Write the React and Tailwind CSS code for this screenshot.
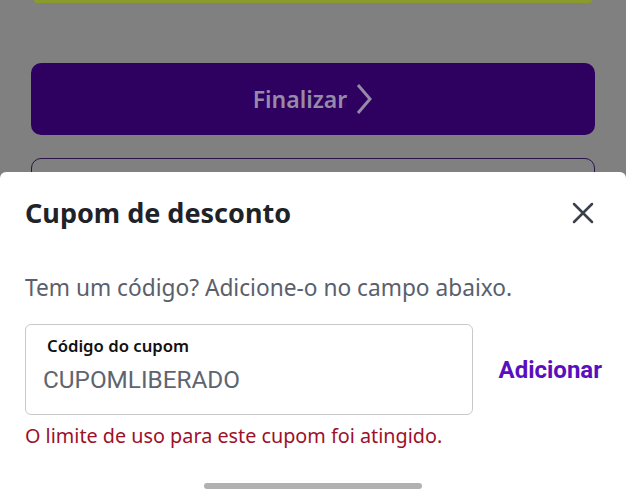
import React from 'react';

const CouponSheet = () => {
  return (
    <div className="flex flex-1 flex-col bg-white rounded-t-[6px] px-[25px]">
      {/* Header */}
      <div className="flex items-center justify-between pt-[24px]">
        <h2 className="text-[27px] leading-[34px] font-bold text-[#1f2328] font-['Noto_Sans',sans-serif]">
          Cupom de desconto
        </h2>
        <button className="mr-[7px] text-[#3a404c]" aria-label="Fechar">
          <svg width="22" height="22" viewBox="0 0 22 22" fill="none" stroke="currentColor" strokeWidth="2.5" strokeLinecap="round">
            <path d="M2 2l18 18M20 2L2 20" />
          </svg>
        </button>
      </div>

      <p className="mt-[44px] text-[22.7px] leading-[28px] text-[#59606c] font-['Noto_Sans',sans-serif]">
        Tem um código? Adicione-o no campo abaixo.
      </p>

      {/* Coupon input */}
      <div className="mt-[22px] flex items-center">
        <div className="w-[448px] h-[91px] rounded-[6px] border border-[#c9c9c9] pl-[17px] pt-[10px]">
          <div className="pl-[4px] text-[16.7px] leading-[21px] font-semibold text-[#111] font-['Noto_Sans',sans-serif]">
            Código do cupom
          </div>
          <div className="mt-[9px] text-[24.3px] leading-[30px] text-[#5e6570] font-['Roboto',sans-serif]">
            CUPOMLIBERADO
          </div>
        </div>
        <button className="ml-auto mr-[-1px] text-[24px] font-bold text-[#5a0fbe] font-['Roboto',sans-serif]">
          Adicionar
        </button>
      </div>

      <p className="mt-[8px] text-[19.8px] leading-[26px] text-[#9e0f2a] font-['Noto_Sans',sans-serif]">
        O limite de uso para este cupom foi atingido.
      </p>

      <div className="mt-[34px] mx-auto h-[6px] w-[218px] rounded-full bg-[#b1b1b1]" />
    </div>
  );
};

const App = () => {
  return (
    <div className="w-[626px] h-[500px] flex flex-col overflow-hidden bg-[#808080]">
      {/* Dimmed page behind the sheet */}
      <div className="h-[172px] shrink-0 overflow-hidden px-[31px]">
        <div className="mx-[3px] h-[3px] rounded-b-[3px] bg-[#8b9b2b]" />
        <button className="mt-[60px] flex h-[72px] w-full items-center justify-center gap-[8px] rounded-[10px] bg-[#2e0060]">
          <span className="text-[23px] font-semibold text-[#968aa6] font-['Noto_Sans',sans-serif]">Finalizar</span>
          <svg width="18" height="32" viewBox="0 0 18 32" fill="none" stroke="#968aa6" strokeWidth="3">
            <path d="M3 2l12 14L3 30" />
          </svg>
        </button>
        <div className="mt-[23px] h-[60px] rounded-[10px] border border-[#2a1548]" />
      </div>
      <CouponSheet />
    </div>
  );
};

export default App;
